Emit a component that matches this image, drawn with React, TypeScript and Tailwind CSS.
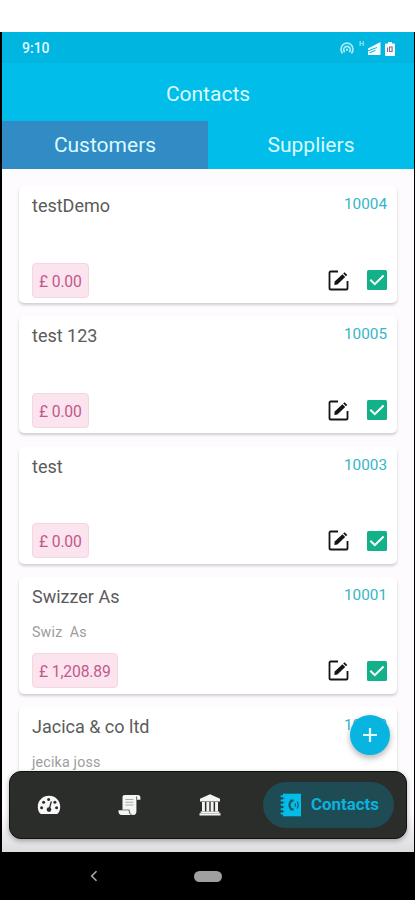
import React, { useState } from 'react';

interface IContact {
  code: string;
  name: string;
  person?: string;
  balance: string;
}

interface IContactCard {
  contact: IContact;
}

const customers: IContact[] = [
  { code: '10004', name: 'testDemo', balance: '£ 0.00' },
  { code: '10005', name: 'test 123', balance: '£ 0.00' },
  { code: '10003', name: 'test', balance: '£ 0.00' },
  { code: '10001', name: 'Swizzer As', person: 'Swiz  As', balance: '£ 1,208.89' },
  { code: '10002', name: 'Jacica & co ltd', person: 'jecika joss', balance: '£ 0.00' },
];

const EditIcon = () => (
  <svg width="21" height="21" viewBox="0 0 21 21" fill="none" stroke="#151515">
    <path d="M10 1.5H2.6a1.1 1.1 0 0 0-1.1 1.1v15.8a1.1 1.1 0 0 0 1.1 1.1h15.8a1.1 1.1 0 0 0 1.1-1.1V11" strokeWidth="1.8" />
    <path d="M6.3 14.9l.4-3.4 7.7-7.3 2.8 2.8-7.8 7.4z" fill="#151515" stroke="none" />
    <path d="M15.2 3.5l1.4-1.3 2.7 2.7-1.4 1.3z" fill="#151515" stroke="none" />
  </svg>
);

const CheckIcon = () => (
  <svg width="20" height="20" viewBox="0 0 20 20" fill="none">
    <rect width="20" height="20" rx="1.5" fill="#13b189" />
    <path d="M3.3 9.7l4.5 4.5 8.8-8.7" stroke="#fff" strokeWidth="2" />
  </svg>
);

const GaugeIcon = () => (
  <svg width="24" height="20" viewBox="0 0 24 20" fill="none">
    <path d="M12 .8C5.7.8.8 5.6.8 11.7c0 2.5.7 4.6 1.9 6.4.4.6 1 .9 1.7.9h15.2c.7 0 1.3-.3 1.7-.9 1.2-1.8 1.9-3.9 1.9-6.4C23.2 5.6 18.3.8 12 .8z" fill="#f7f7f7" />
    <g fill="#2a2d29">
      <circle cx="4.6" cy="12.7" r="1.5" />
      <circle cx="6.6" cy="7.3" r="1.5" />
      <circle cx="11.6" cy="4.5" r="1.5" />
      <circle cx="17.9" cy="7.3" r="1.5" />
      <circle cx="19.6" cy="12.7" r="1.5" />
      <circle cx="12" cy="14.6" r="2.3" />
    </g>
    <path d="M12.2 14.2l2-7.2" stroke="#2a2d29" strokeWidth="1.3" strokeLinecap="round" />
  </svg>
);

const ScriptIcon = () => (
  <svg width="23" height="22" viewBox="0 0 23 22" fill="none">
    <path d="M4.5 15V3.2C4.5 1.8 5.4 1 6.8 1H20c1.5 0 2.4 1 2.4 2.4v2.4h-4v11.6c0 2.2-1.3 3.6-3.4 3.6-1.8 0-2.9-1-3.2-2.9L11.3 16H4.5z" fill="#f4f4f4" />
    <path d="M.5 16.2h10.2c.1 2.2.8 3.9 2.6 4.8H3.6C1.7 21 .5 19.600.5 17.600z" fill="#f4f4f4" />
    <path d="M18.6 2.5v3.3" stroke="#2a2d29" strokeWidth=".7" />
    <path d="M4.5 15.5h6.8c.1 2.5.7 4 2.2 4.7" stroke="#888" strokeWidth=".6" />
    <path d="M7.4 5.5h8M7.4 8.2h8M7.4 11h8" stroke="#aaa" strokeWidth="1.1" />
  </svg>
);

const BankIcon = () => (
  <svg width="22" height="22" viewBox="0 0 22 22" fill="#f4f4f4">
    <path d="M11 .3l10 4.500v2.700H1V4.800z" />
    <path d="M3 7.900h2.900v9.500H3zM7.400 7.900h2.900v9.500H7.400zM11.700 7.900h2.900v9.500h-2.900zM16.100 7.900H19v9.500h-2.900z" />
    <path d="M1.700 17.400h18.600v1.500H1.700zM.5 19.300h21v2.300H.5z" />
  </svg>
);

const AddressBookIcon = () => (
  <svg width="22" height="24" viewBox="0 0 22 24" fill="none">
    <path d="M3 .7h18v22.6H3z" fill="#04bce8" />
    <path d="M1.5 3.2h3M1.5 7.4h3M1.5 11.8h3M1.5 16.2h3M1.5 20.5h3" stroke="#04bce8" strokeWidth="2" strokeLinecap="round" />
    <path d="M2.8 5.3h1.5M2.8 9.6h1.5M2.8 14h1.5M2.8 18.3h1.5" stroke="#1c4e5a" strokeWidth=".9" />
    <path d="M13.6 7.7h-2.4c-2.200 2.700-2.200 5.900 0 8.600h2.400" stroke="#15586a" strokeWidth="2.200" />
    <path d="M15 10.200c.7 1.200.7 2.400 0 3.600M17.200 8.400c1.300 2.400 1.300 4.800 0 7.200" stroke="#15586a" strokeWidth="1.100" />
  </svg>
);

const StatusBar = () => (
  <div className="flex h-[31px] items-center justify-between bg-[#00b5df] pr-[19px] pl-5 pt-[2px]">
    <span className="text-[14px] font-medium text-[#e2fbff]">9:10</span>
    <div className="flex items-center">
      <svg width="14" height="13" viewBox="0 0 14 13" fill="none" stroke="#a5edf4" strokeWidth="1.7">
        <path d="M2.6 11.3a6 6 0 1 1 8.8 0" />
        <path d="M4.8 10.2a3.3 3.3 0 1 1 4.4 0" />
        <circle cx="7" cy="7.8" r="1.2" fill="#a5edf4" stroke="none" />
      </svg>
      <span className="mb-[9px] ml-[5px] w-2 text-[7px] leading-none font-medium text-[#b9f2f8]">H</span>
      <svg width="13" height="13" viewBox="0 0 13 13" className="ml-px">
        <path d="M0 13V6.500L12.500 0v13z" fill="#f3fdff" />
        <path d="M0 8.800L9 5.500M1.500 10.800l6-2.400" stroke="#00b5df" strokeWidth="1" />
      </svg>
      <svg width="10" height="14" viewBox="0 0 10 14" className="ml-1">
        <path d="M3 0h4v1.5h2.200c.5 0 .8.3.8.8v10.900c0 .5-.3.8-.8.8H.8c-.5 0-.8-.3-.8-.8V2.300c0-.5.3-.8.8-.8H3z" fill="#f3fdff" />
        <path d="M2.500 10V5.500M4.500 5h2.600v4.500H4.500z" stroke="#8c6680" strokeWidth="1.100" fill="none" />
      </svg>
    </div>
  </div>
);

const ContactCard = ({ contact }: IContactCard) => (
  <div className="flex h-[117px] shrink-0 flex-col rounded-[5px] bg-white pr-[10px] pl-[13px] shadow-[0_2px_3px_rgba(0,0,0,0.18)]">
    <div className="flex justify-between">
      <span className="pt-[9px] text-[18px] leading-[22px] text-[#5b5b5b]">{contact.name}</span>
      <span className="pt-2 text-[15.3px] leading-5 text-[#35b5c9]">{contact.code}</span>
    </div>
    <span className="mt-[15px] h-[18px] text-[14.2px] leading-[18px] tracking-[0.2px] whitespace-pre text-[#9c9c9c]">
      {contact.person}
    </span>
    <div className="mt-[12.5px] flex items-center justify-between">
      <span className="h-[35px] rounded-[4px] border border-[#f4d5e2] bg-[#fce4ee] px-[6px] text-[15.7px] leading-[35px] tracking-[-0.15px] text-[#c0598c]">
        {contact.balance}
      </span>
      <div className="flex items-center gap-[18px]">
        <EditIcon />
        <CheckIcon />
      </div>
    </div>
  </div>
);

const App = () => {
  const [tab, setTab] = useState('Customers');

  return (
    <div className="h-[900px] w-[415px] overflow-hidden bg-white pt-8 font-[Roboto,sans-serif]">
      <div className="flex h-[868px] flex-col bg-black">
        <div className="relative mr-px ml-[2px] flex h-[820px] flex-col overflow-hidden bg-[#fdfbfd]">
          <StatusBar />
          <h1 className="h-[58px] shrink-0 bg-[#00bdea] text-center text-[21px] leading-[63px] text-[#d9faff]">Contacts</h1>
          <div className="grid h-12 shrink-0 grid-cols-2 bg-[#00bdea]">
            {['Customers', 'Suppliers'].map((name) => (
              <button
                key={name}
                onClick={() => setTab(name)}
                className={
                  'h-12 text-[21px] leading-[48px] text-[#dcfaff] ' + (tab === name ? 'bg-[#318cc6]' : 'bg-[#00bdea]')
                }
              >
                {name}
              </button>
            ))}
          </div>
          <div className="flex flex-1 flex-col gap-[13.3px] overflow-hidden px-[17px] pt-[17px]">
            {customers.map((contact) => (
              <ContactCard key={contact.code} contact={contact} />
            ))}
          </div>

          <button className="absolute top-[683px] right-[24px] flex h-10 w-10 items-center justify-center rounded-full bg-[#08b5e0] shadow-[0_3px_6px_rgba(0,0,0,0.3)]">
            <svg width="14" height="14" viewBox="0 0 14 14" stroke="#e6fbff" strokeWidth="2.2">
              <path d="M7 0v14M0 7h14" />
            </svg>
          </button>

          <div className="absolute inset-x-0 bottom-0 h-[81px] bg-linear-to-b from-transparent from-50% to-[#dddcdf]">
            <nav className="mx-[7px] flex h-[68px] items-center rounded-[12px] border border-[#111] bg-[#2a2d29] pr-[12px] pl-[27px] shadow-[0_2px_5px_rgba(0,0,0,0.3)]">
              <GaugeIcon />
              <div className="ml-[57px]">
                <ScriptIcon />
              </div>
              <div className="ml-[58px]">
                <BankIcon />
              </div>
              <div className="ml-auto flex h-[46px] w-[131px] items-center rounded-full bg-[#1f4b55] pl-[17px]">
                <AddressBookIcon />
                <span className="ml-[9px] text-[16.9px] font-bold text-[#0bb2dc]">Contacts</span>
              </div>
            </nav>
          </div>
        </div>

        <div className="flex h-12 items-center">
          <svg width="8" height="12" viewBox="0 0 8 12" className="ml-[90px]" fill="none" stroke="#aaa" strokeWidth="1.6">
            <path d="M6.5 1.2L1.7 6l4.8 4.8" />
          </svg>
          <div className="ml-[96px] h-[11px] w-7 rounded-full bg-[#a0a0a0]" />
        </div>
      </div>
    </div>
  );
};

export default App;
